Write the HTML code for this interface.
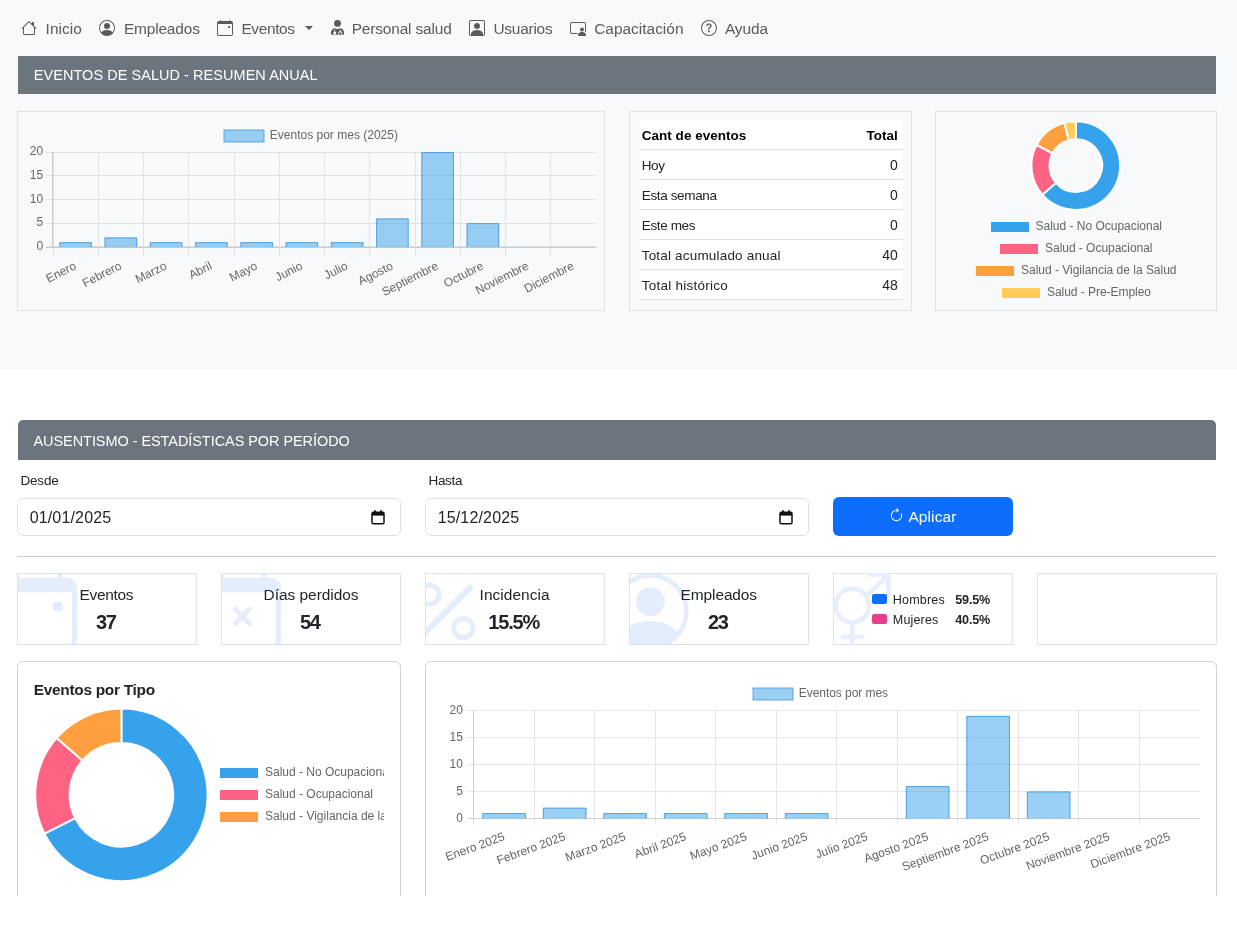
<!DOCTYPE html>
<html lang="es"><head><meta charset="utf-8"><title>Eventos de salud</title>
<style>
html,body{margin:0;padding:0;background:#fff}
body{width:1237px;height:928px;position:relative;overflow:hidden;font-family:"Liberation Sans", sans-serif}
.t{position:absolute;white-space:pre;line-height:1;}
svg{display:block;overflow:visible}
</style></head><body>
<div id="root" style="position:absolute;left:0;top:0;width:1237px;height:928px;will-change:transform">
<div style="position:absolute;left:0;top:0;width:1237px;height:370px;background:#f8f9fa"></div>
<svg style="position:absolute;left:20.5px;top:20px" width="16" height="16" viewBox="0 0 16 16" fill="#595a5c"><path d="M8.707 1.5a1 1 0 0 0-1.414 0L.646 8.146a.5.5 0 0 0 .708.708L2 8.207V13.5A1.5 1.5 0 0 0 3.5 15h9a1.5 1.5 0 0 0 1.5-1.5V8.207l.646.647a.5.5 0 0 0 .708-.708L13 5.793V2.500a.5.5 0 0 0-.5-.5h-1a.5.5 0 0 0-.5.5v1.293L8.707 1.500ZM13 7.207V13.500a.5.5 0 0 1-.5.5h-9a.5.5 0 0 1-.5-.5V7.207l5-5 5 5Z"/></svg>
<svg style="position:absolute;left:99px;top:20px" width="16" height="16" viewBox="0 0 16 16" fill="#595a5c"><path d="M11 6a3 3 0 1 1-6 0 3 3 0 0 1 6 0z"/><path fill-rule="evenodd" d="M0 8a8 8 0 1 1 16 0A8 8 0 0 1 0 8zm8-7a7 7 0 0 0-5.468 11.370C3.242 11.226 4.805 10 8 10s4.757 1.225 5.468 2.370A7 7 0 0 0 8 1z"/></svg>
<svg style="position:absolute;left:216.7px;top:20px" width="16" height="16" viewBox="0 0 16 16" fill="#595a5c"><path d="M11 6.500a.5.5 0 0 1 .5-.5h1a.5.5 0 0 1 .5.5v1a.5.5 0 0 1-.5.5h-1a.5.5 0 0 1-.5-.5v-1z"/><path d="M3.500 0a.5.5 0 0 1 .5.5V1h8V.500a.5.5 0 0 1 1 0V1h1a2 2 0 0 1 2 2v11a2 2 0 0 1-2 2H2a2 2 0 0 1-2-2V3a2 2 0 0 1 2-2h1V.500a.5.5 0 0 1 .5-.5zM1 4v10a1 1 0 0 0 1 1h12a1 1 0 0 0 1-1V4H1z"/></svg>
<div style="position:absolute;left:304.6px;top:26.3px;width:0;height:0;border-left:4.4px solid transparent;border-right:4.4px solid transparent;border-top:4.6px solid #595a5c"></div>
<svg style="position:absolute;left:331px;top:20px" width="13" height="14.857142857142858" viewBox="0 0 14 16" fill="#595a5c"><circle cx="7" cy="3.700" r="3.700"/><path fill-rule="evenodd" d="M3.800 8.800C1.600 9.300 0 11 0 13.300V14.700c0 .7.6 1.300 1.300 1.300h11.400c.7 0 1.300-.6 1.300-1.300v-1.400c0-2.300-1.600-4-3.800-4.500c-.9.500-2 .8-3.200.8s-2.300-.300-3.200-.800zM3.500 10.500v2.200a1.500 1.500 0 1 0 1 0v-2zM9.500 10.500v1.600c-1 .3-1.700 1.200-1.700 2.200v1h1v-1c0-.7.500-1.200 1.200-1.200s1.200.5 1.200 1.200v1h1v-1c0-1-.7-1.900-1.700-2.200v-1.400z"/></svg>
<svg style="position:absolute;left:468.9px;top:20px" width="16" height="16" viewBox="0 0 16 16" fill="#595a5c"><path d="M11 6a3 3 0 1 1-6 0 3 3 0 0 1 6 0z"/><path d="M2 0a2 2 0 0 0-2 2v12a2 2 0 0 0 2 2h12a2 2 0 0 0 2-2V2a2 2 0 0 0-2-2H2zm12 1a1 1 0 0 1 1 1v12a1 1 0 0 1-1 1v-1c0-1-1-4-6-4s-6 3-6 4v1a1 1 0 0 1-1-1V2a1 1 0 0 1 1-1h12z"/></svg>
<svg style="position:absolute;left:569.7px;top:20px" width="16" height="16" viewBox="0 0 16 16" fill="#595a5c"><path d="M14 9.500a2 2 0 1 1-4 0 2 2 0 0 1 4 0Zm-6 5.700c0 .8.8.8.8.8h6.400s.8 0 .8-.8-.8-3.200-4-3.200-4 2.400-4 3.200Z"/><path d="M2 2a2 2 0 0 0-2 2v8a2 2 0 0 0 2 2h5.243c.122-.326.295-.668.526-1H2a1 1 0 0 1-1-1V4a1 1 0 0 1 1-1h12a1 1 0 0 1 1 1v7.810c.353.230.656.496.910.783.059-.187.090-.386.090-.593V4a2 2 0 0 0-2-2H2Z"/></svg>
<svg style="position:absolute;left:700.8px;top:20px" width="16" height="16" viewBox="0 0 16 16" fill="#595a5c"><path d="M8 15A7 7 0 1 1 8 1a7 7 0 0 1 0 14zm0 1A8 8 0 1 0 8 0a8 8 0 0 0 0 16z"/><path d="M5.255 5.786a.237.237 0 0 0 .241.247h.825c.138 0 .248-.113.266-.25.090-.656.540-1.134 1.342-1.134.686 0 1.314.343 1.314 1.168 0 .635-.374.927-.965 1.371-.673.489-1.206 1.060-1.168 1.987l.003.217a.25.25 0 0 0 .25.246h.811a.25.25 0 0 0 .25-.25v-.105c0-.718.273-.927 1.010-1.486.609-.463 1.244-.977 1.244-2.056 0-1.511-1.276-2.241-2.673-2.241-1.267 0-2.655.590-2.750 2.286zm1.557 5.763c0 .533.425.927 1.010.927.609 0 1.028-.394 1.028-.927 0-.552-.420-.940-1.029-.940-.584 0-1.009.388-1.009.940z"/></svg>
<div style="position:absolute;left:18px;top:56px;width:1198px;height:38px;background:#6c757d"></div>
<div style="position:absolute;left:17px;top:111px;width:588px;height:200px;box-sizing:border-box;border:1px solid #dee2e6;background:transparent;border-radius:0px;"></div>
<div style="position:absolute;left:629px;top:111px;width:283px;height:200px;box-sizing:border-box;border:1px solid #dee2e6;background:transparent;border-radius:0px;"></div>
<div style="position:absolute;left:935px;top:111px;width:282px;height:200px;box-sizing:border-box;border:1px solid #dee2e6;background:transparent;border-radius:0px;"></div>
<svg style="position:absolute;left:0;top:0" width="1237" height="928" viewBox="0 0 1237 928"><line x1="46" y1="246.5" x2="596" y2="246.5" stroke="#e1e2e3" stroke-width="1"/><line x1="46" y1="223.5" x2="596" y2="223.5" stroke="#e1e2e3" stroke-width="1"/><line x1="46" y1="199.5" x2="596" y2="199.5" stroke="#e1e2e3" stroke-width="1"/><line x1="46" y1="175.5" x2="596" y2="175.5" stroke="#e1e2e3" stroke-width="1"/><line x1="46" y1="152.5" x2="596" y2="152.5" stroke="#e1e2e3" stroke-width="1"/><line x1="53.5" y1="152.1" x2="53.5" y2="255.9" stroke="#e1e2e3" stroke-width="1"/><line x1="98.5" y1="152.1" x2="98.5" y2="255.9" stroke="#e1e2e3" stroke-width="1"/><line x1="143.5" y1="152.1" x2="143.5" y2="255.9" stroke="#e1e2e3" stroke-width="1"/><line x1="188.5" y1="152.1" x2="188.5" y2="255.9" stroke="#e1e2e3" stroke-width="1"/><line x1="234.5" y1="152.1" x2="234.5" y2="255.9" stroke="#e1e2e3" stroke-width="1"/><line x1="279.5" y1="152.1" x2="279.5" y2="255.9" stroke="#e1e2e3" stroke-width="1"/><line x1="324.5" y1="152.1" x2="324.5" y2="255.9" stroke="#e1e2e3" stroke-width="1"/><line x1="369.5" y1="152.1" x2="369.5" y2="255.9" stroke="#e1e2e3" stroke-width="1"/><line x1="415.5" y1="152.1" x2="415.5" y2="255.9" stroke="#e1e2e3" stroke-width="1"/><line x1="460.5" y1="152.1" x2="460.5" y2="255.9" stroke="#e1e2e3" stroke-width="1"/><line x1="505.5" y1="152.1" x2="505.5" y2="255.9" stroke="#e1e2e3" stroke-width="1"/><line x1="550.5" y1="152.1" x2="550.5" y2="255.9" stroke="#e1e2e3" stroke-width="1"/><line x1="46" y1="247.5" x2="596" y2="247.5" stroke="#c9cacb" stroke-width="1"/><line x1="52.5" y1="152.1" x2="52.5" y2="246.9" stroke="#c9cacb" stroke-width="1"/><rect x="59.34" y="242.16" width="32.58" height="4.74" fill="rgba(54,162,235,0.5)"/><path d="M59.84 246.90V242.66H91.41V246.90" fill="none" stroke="rgba(45,140,215,0.65)" stroke-width="1"/><rect x="104.59" y="237.42" width="32.58" height="9.48" fill="rgba(54,162,235,0.5)"/><path d="M105.09 246.90V237.92H136.67V246.90" fill="none" stroke="rgba(45,140,215,0.65)" stroke-width="1"/><rect x="149.84" y="242.16" width="32.58" height="4.74" fill="rgba(54,162,235,0.5)"/><path d="M150.34 246.90V242.66H181.92V246.90" fill="none" stroke="rgba(45,140,215,0.65)" stroke-width="1"/><rect x="195.09" y="242.16" width="32.58" height="4.74" fill="rgba(54,162,235,0.5)"/><path d="M195.59 246.90V242.66H227.17V246.90" fill="none" stroke="rgba(45,140,215,0.65)" stroke-width="1"/><rect x="240.34" y="242.16" width="32.58" height="4.74" fill="rgba(54,162,235,0.5)"/><path d="M240.84 246.90V242.66H272.42V246.90" fill="none" stroke="rgba(45,140,215,0.65)" stroke-width="1"/><rect x="285.58" y="242.16" width="32.58" height="4.74" fill="rgba(54,162,235,0.5)"/><path d="M286.08 246.90V242.66H317.66V246.90" fill="none" stroke="rgba(45,140,215,0.65)" stroke-width="1"/><rect x="330.83" y="242.16" width="32.58" height="4.74" fill="rgba(54,162,235,0.5)"/><path d="M331.33 246.90V242.66H362.91V246.90" fill="none" stroke="rgba(45,140,215,0.65)" stroke-width="1"/><rect x="376.08" y="218.46" width="32.58" height="28.44" fill="rgba(54,162,235,0.5)"/><path d="M376.58 246.90V218.96H408.16V246.90" fill="none" stroke="rgba(45,140,215,0.65)" stroke-width="1"/><rect x="421.33" y="152.10" width="32.58" height="94.80" fill="rgba(54,162,235,0.5)"/><path d="M421.83 246.90V152.60H453.41V246.90" fill="none" stroke="rgba(45,140,215,0.65)" stroke-width="1"/><rect x="466.58" y="223.20" width="32.58" height="23.70" fill="rgba(54,162,235,0.5)"/><path d="M467.08 246.90V223.70H498.66V246.90" fill="none" stroke="rgba(45,140,215,0.65)" stroke-width="1"/><rect x="224.0" y="130.0" width="40" height="12" fill="rgba(54,162,235,0.5)" stroke="rgba(60,145,210,0.75)" stroke-width="1"/><text transform="translate(77.12,268.40) rotate(-27)" text-anchor="end" font-family='"Liberation Sans", sans-serif' font-size="12" fill="#666" >Enero</text><text transform="translate(122.38,268.40) rotate(-27)" text-anchor="end" font-family='"Liberation Sans", sans-serif' font-size="12" fill="#666" >Febrero</text><text transform="translate(167.62,268.40) rotate(-27)" text-anchor="end" font-family='"Liberation Sans", sans-serif' font-size="12" fill="#666" >Marzo</text><text transform="translate(212.88,268.40) rotate(-27)" text-anchor="end" font-family='"Liberation Sans", sans-serif' font-size="12" fill="#666" >Abril</text><text transform="translate(258.12,268.40) rotate(-27)" text-anchor="end" font-family='"Liberation Sans", sans-serif' font-size="12" fill="#666" >Mayo</text><text transform="translate(303.38,268.40) rotate(-27)" text-anchor="end" font-family='"Liberation Sans", sans-serif' font-size="12" fill="#666" >Junio</text><text transform="translate(348.62,268.40) rotate(-27)" text-anchor="end" font-family='"Liberation Sans", sans-serif' font-size="12" fill="#666" >Julio</text><text transform="translate(393.88,268.40) rotate(-27)" text-anchor="end" font-family='"Liberation Sans", sans-serif' font-size="12" fill="#666" >Agosto</text><text transform="translate(439.12,268.40) rotate(-27)" text-anchor="end" font-family='"Liberation Sans", sans-serif' font-size="12" fill="#666" >Septiembre</text><text transform="translate(484.38,268.40) rotate(-27)" text-anchor="end" font-family='"Liberation Sans", sans-serif' font-size="12" fill="#666" >Octubre</text><text transform="translate(529.62,268.40) rotate(-27)" text-anchor="end" font-family='"Liberation Sans", sans-serif' font-size="12" fill="#666" >Noviembre</text><text transform="translate(574.88,268.40) rotate(-27)" text-anchor="end" font-family='"Liberation Sans", sans-serif' font-size="12" fill="#666" >Diciembre</text></svg>
<div style="position:absolute;left:640px;top:120px;width:263px;height:180px;background:#fff"></div>
<div style="position:absolute;left:640px;top:149px;width:263px;height:1px;background:#dee2e6"></div>
<div style="position:absolute;left:640px;top:179px;width:263px;height:1px;background:#dee2e6"></div>
<div style="position:absolute;left:640px;top:209px;width:263px;height:1px;background:#dee2e6"></div>
<div style="position:absolute;left:640px;top:239px;width:263px;height:1px;background:#dee2e6"></div>
<div style="position:absolute;left:640px;top:269px;width:263px;height:1px;background:#dee2e6"></div>
<div style="position:absolute;left:640px;top:299px;width:263px;height:1px;background:#dee2e6"></div>
<svg style="position:absolute;left:0;top:0" width="1237" height="928" viewBox="0 0 1237 928"><path d="M1075.80 121.20A44.4 44.4 0 1 1 1042.29 194.73L1055.95 182.85A26.3 26.3 0 1 0 1075.80 139.30Z" fill="#36a2eb" stroke="#fff" stroke-width="2" stroke-linejoin="round"/><path d="M1042.29 194.73A44.4 44.4 0 0 1 1036.60 144.76L1052.58 153.25A26.3 26.3 0 0 0 1055.95 182.85Z" fill="#ff6384" stroke="#fff" stroke-width="2" stroke-linejoin="round"/><path d="M1036.60 144.76A44.4 44.4 0 0 1 1064.31 122.71L1068.99 140.20A26.3 26.3 0 0 0 1052.58 153.25Z" fill="#ff9f40" stroke="#fff" stroke-width="2" stroke-linejoin="round"/><path d="M1064.31 122.71A44.4 44.4 0 0 1 1075.80 121.20L1075.80 139.30A26.3 26.3 0 0 0 1068.99 140.20Z" fill="#ffcd56" stroke="#fff" stroke-width="2" stroke-linejoin="round"/></svg>
<div style="position:absolute;left:990.5px;top:221.7px;width:38px;height:10px;background:#36a2eb"></div>
<div style="position:absolute;left:1000px;top:243.7px;width:38px;height:10px;background:#ff6384"></div>
<div style="position:absolute;left:976px;top:265.7px;width:38px;height:10px;background:#ff9f40"></div>
<div style="position:absolute;left:1002px;top:287.7px;width:38px;height:10px;background:#ffcd56"></div>
<div style="position:absolute;left:18px;top:420px;width:1198px;height:40px;background:#6c757d;border-radius:5px 5px 0 0"></div>
<div style="position:absolute;left:17px;top:498px;width:384px;height:38px;box-sizing:border-box;border:1px solid #dee2e6;border-radius:6px;background:#fff"></div>
<svg style="position:absolute;left:371px;top:510px" width="14" height="15" viewBox="0 0 14 15"><rect x="1" y="2.2" width="12" height="11.6" rx="1.3" fill="none" stroke="#111" stroke-width="1.5"/><rect x="1" y="2" width="12" height="3.6" fill="#111"/><rect x="3" y="0.3" width="1.8" height="2.5" fill="#111"/><rect x="9.2" y="0.3" width="1.8" height="2.5" fill="#111"/></svg>
<div style="position:absolute;left:425px;top:498px;width:384px;height:38px;box-sizing:border-box;border:1px solid #dee2e6;border-radius:6px;background:#fff"></div>
<svg style="position:absolute;left:779px;top:510px" width="14" height="15" viewBox="0 0 14 15"><rect x="1" y="2.2" width="12" height="11.6" rx="1.3" fill="none" stroke="#111" stroke-width="1.5"/><rect x="1" y="2" width="12" height="3.6" fill="#111"/><rect x="3" y="0.3" width="1.8" height="2.5" fill="#111"/><rect x="9.2" y="0.3" width="1.8" height="2.5" fill="#111"/></svg>
<div style="position:absolute;left:833px;top:497px;width:180px;height:39px;background:#0d6efd;border-radius:6px"></div>
<svg style="position:absolute;left:889px;top:508px" width="15" height="15" viewBox="0 0 16 16" fill="#fff"><path fill-rule="evenodd" d="M8 3a5 5 0 1 0 4.546 2.914.5.5 0 0 1 .908-.417A6 6 0 1 1 8 2v1z"/><path d="M8 4.466V.534a.25.25 0 0 1 .410-.192l2.360 1.966c.12.1.12.284 0 .384L8.410 4.658A.25.25 0 0 1 8 4.466z"/></svg>
<div style="position:absolute;left:17px;top:556px;width:1199px;height:1px;background:#c9cbcd"></div>
<div style="position:absolute;left:17px;top:573px;width:180px;height:72px;box-sizing:border-box;border:1px solid #dee2e6;background:#fff;overflow:hidden"><svg style="position:absolute;left:-18px;top:-1px" width="76.8" height="76.8" viewBox="0 0 16 16" fill="#e4edfc"><path d="M11 6.500a.5.5 0 0 1 .5-.5h1a.5.5 0 0 1 .5.5v1a.5.5 0 0 1-.5.5h-1a.5.5 0 0 1-.5-.5v-1z"/><path d="M3.500 0a.5.5 0 0 1 .5.5V1h8V.500a.5.5 0 0 1 1 0V1h1a2 2 0 0 1 2 2v11a2 2 0 0 1-2 2H2a2 2 0 0 1-2-2V3a2 2 0 0 1 2-2h1V.500a.5.5 0 0 1 .5-.5zM1 4v10a1 1 0 0 0 1 1h12a1 1 0 0 0 1-1V4H1z"/></svg></div>
<div style="position:absolute;left:221px;top:573px;width:180px;height:72px;box-sizing:border-box;border:1px solid #dee2e6;background:#fff;overflow:hidden"><svg style="position:absolute;left:-18px;top:-1px" width="76.8" height="76.8" viewBox="0 0 16 16" fill="#e4edfc"><path d="M6.146 7.146a.5.5 0 0 1 .708 0L8 8.293l1.146-1.147a.5.5 0 1 1 .708.708L8.707 9l1.147 1.146a.5.5 0 0 1-.708.708L8 9.707l-1.146 1.147a.5.5 0 0 1-.708-.708L7.293 9 6.146 7.854a.5.5 0 0 1 0-.708z"/><path d="M3.500 0a.5.5 0 0 1 .5.5V1h8V.500a.5.5 0 0 1 1 0V1h1a2 2 0 0 1 2 2v11a2 2 0 0 1-2 2H2a2 2 0 0 1-2-2V3a2 2 0 0 1 2-2h1V.500a.5.5 0 0 1 .5-.5zM1 4v10a1 1 0 0 0 1 1h12a1 1 0 0 0 1-1V4H1z"/></svg></div>
<div style="position:absolute;left:425px;top:573px;width:180px;height:72px;box-sizing:border-box;border:1px solid #dee2e6;background:#fff;overflow:hidden"><svg style="position:absolute;left:-18px;top:-1px" width="76.8" height="76.8" viewBox="0 0 16 16" fill="#e4edfc"><path d="M13.442 2.558a.625.625 0 0 1 0 .884l-10 10a.625.625 0 1 1-.884-.884l10-10a.625.625 0 0 1 .884 0zM4.500 6a1.500 1.500 0 1 1 0-3 1.500 1.500 0 0 1 0 3zm0 1a2.500 2.500 0 1 0 0-5 2.500 2.500 0 0 0 0 5zm7 6a1.500 1.500 0 1 1 0-3 1.500 1.500 0 0 1 0 3zm0 1a2.500 2.500 0 1 0 0-5 2.500 2.500 0 0 0 0 5z"/></svg></div>
<div style="position:absolute;left:629px;top:573px;width:180px;height:72px;box-sizing:border-box;border:1px solid #dee2e6;background:#fff;overflow:hidden"><svg style="position:absolute;left:-18px;top:-1px" width="76.8" height="76.8" viewBox="0 0 16 16" fill="#e4edfc"><path d="M11 6a3 3 0 1 1-6 0 3 3 0 0 1 6 0z"/><path fill-rule="evenodd" d="M0 8a8 8 0 1 1 16 0A8 8 0 0 1 0 8zm8-7a7 7 0 0 0-5.468 11.370C3.242 11.226 4.805 10 8 10s4.757 1.225 5.468 2.370A7 7 0 0 0 8 1z"/></svg></div>
<div style="position:absolute;left:833px;top:573px;width:180px;height:72px;box-sizing:border-box;border:1px solid #dee2e6;background:#fff;border-radius:0px;"></div>
<div style="position:absolute;left:1037px;top:573px;width:180px;height:72px;box-sizing:border-box;border:1px solid #dee2e6;background:#fff;border-radius:0px;"></div>
<div style="position:absolute;left:833px;top:573px;width:180px;height:72px;overflow:hidden"><svg style="position:absolute;left:-19px;top:-1px" width="76.8" height="76.8" viewBox="0 0 16 16" fill="#e8eefb"><path fill-rule="evenodd" d="M11.500 1a.5.5 0 0 1 0-1h4a.5.5 0 0 1 .5.5v4a.5.5 0 0 1-1 0V1.707l-3.450 3.450A4 4 0 0 1 8.500 10.970V13H10a.5.5 0 0 1 0 1H8.500v1.500a.5.5 0 0 1-1 0V14H6a.5.5 0 0 1 0-1h1.500v-2.030a4 4 0 1 1 3.471-6.648L14.293 1H11.500zm-.997 4.346a3 3 0 1 0-5.006 3.309 3 3 0 0 0 5.006-3.310z"/></svg></div>
<div style="position:absolute;left:872px;top:593.5px;width:15px;height:10px;background:#0d6efd;border-radius:2px"></div>
<div style="position:absolute;left:872px;top:613.5px;width:15px;height:10px;background:#e83e8c;border-radius:2px"></div>
<div style="position:absolute;left:17px;top:661px;width:384px;height:260px;box-sizing:border-box;border:1px solid #d3d3d3;background:#fff;border-radius:6px"></div>
<div style="position:absolute;left:425px;top:661px;width:792px;height:260px;box-sizing:border-box;border:1px solid #d3d3d3;background:#fff;border-radius:6px"></div>
<svg style="position:absolute;left:0;top:0" width="1237" height="928" viewBox="0 0 1237 928"><path d="M121.40 708.60A86.2 86.2 0 1 1 44.46 833.67L75.16 818.16A51.8 51.8 0 1 0 121.40 743.00Z" fill="#36a2eb" stroke="#fff" stroke-width="2" stroke-linejoin="round"/><path d="M44.46 833.67A86.2 86.2 0 0 1 56.64 737.91L82.48 760.61A51.8 51.8 0 0 0 75.16 818.16Z" fill="#ff6384" stroke="#fff" stroke-width="2" stroke-linejoin="round"/><path d="M56.64 737.91A86.2 86.2 0 0 1 121.40 708.60L121.40 743.00A51.8 51.8 0 0 0 82.48 760.61Z" fill="#ff9f40" stroke="#fff" stroke-width="2" stroke-linejoin="round"/></svg>
<div style="position:absolute;left:215px;top:760px;width:169px;height:70px;overflow:hidden">
</div>
<div style="position:absolute;left:220px;top:767.5px;width:38px;height:10px;background:#36a2eb"></div>
<div style="position:absolute;left:220px;top:789.5px;width:38px;height:10px;background:#ff6384"></div>
<div style="position:absolute;left:220px;top:811.5px;width:38px;height:10px;background:#ff9f40"></div>
<svg style="position:absolute;left:0;top:0" width="1237" height="928" viewBox="0 0 1237 928"><line x1="466.9" y1="818.5" x2="1199.9" y2="818.5" stroke="#e7e7e7" stroke-width="1"/><line x1="466.9" y1="791.5" x2="1199.9" y2="791.5" stroke="#e7e7e7" stroke-width="1"/><line x1="466.9" y1="764.5" x2="1199.9" y2="764.5" stroke="#e7e7e7" stroke-width="1"/><line x1="466.9" y1="737.5" x2="1199.9" y2="737.5" stroke="#e7e7e7" stroke-width="1"/><line x1="466.9" y1="710.5" x2="1199.9" y2="710.5" stroke="#e7e7e7" stroke-width="1"/><line x1="473.5" y1="710.5" x2="473.5" y2="825.0" stroke="#e7e7e7" stroke-width="1"/><line x1="534.5" y1="710.5" x2="534.5" y2="825.0" stroke="#e7e7e7" stroke-width="1"/><line x1="594.5" y1="710.5" x2="594.5" y2="825.0" stroke="#e7e7e7" stroke-width="1"/><line x1="655.5" y1="710.5" x2="655.5" y2="825.0" stroke="#e7e7e7" stroke-width="1"/><line x1="715.5" y1="710.5" x2="715.5" y2="825.0" stroke="#e7e7e7" stroke-width="1"/><line x1="776.5" y1="710.5" x2="776.5" y2="825.0" stroke="#e7e7e7" stroke-width="1"/><line x1="836.5" y1="710.5" x2="836.5" y2="825.0" stroke="#e7e7e7" stroke-width="1"/><line x1="897.5" y1="710.5" x2="897.5" y2="825.0" stroke="#e7e7e7" stroke-width="1"/><line x1="957.5" y1="710.5" x2="957.5" y2="825.0" stroke="#e7e7e7" stroke-width="1"/><line x1="1018.5" y1="710.5" x2="1018.5" y2="825.0" stroke="#e7e7e7" stroke-width="1"/><line x1="1078.5" y1="710.5" x2="1078.5" y2="825.0" stroke="#e7e7e7" stroke-width="1"/><line x1="1139.5" y1="710.5" x2="1139.5" y2="825.0" stroke="#e7e7e7" stroke-width="1"/><line x1="466.9" y1="818.5" x2="1199.9" y2="818.5" stroke="#cfcfcf" stroke-width="1"/><line x1="473.5" y1="710.5" x2="473.5" y2="818.5" stroke="#cfcfcf" stroke-width="1"/><rect x="482.37" y="813.10" width="43.56" height="5.40" fill="rgba(54,162,235,0.5)"/><path d="M482.87 818.50V813.60H525.43V818.50" fill="none" stroke="rgba(45,140,215,0.65)" stroke-width="1"/><rect x="542.87" y="807.70" width="43.56" height="10.80" fill="rgba(54,162,235,0.5)"/><path d="M543.37 818.50V808.20H585.93V818.50" fill="none" stroke="rgba(45,140,215,0.65)" stroke-width="1"/><rect x="603.37" y="813.10" width="43.56" height="5.40" fill="rgba(54,162,235,0.5)"/><path d="M603.87 818.50V813.60H646.43V818.50" fill="none" stroke="rgba(45,140,215,0.65)" stroke-width="1"/><rect x="663.87" y="813.10" width="43.56" height="5.40" fill="rgba(54,162,235,0.5)"/><path d="M664.37 818.50V813.60H706.93V818.50" fill="none" stroke="rgba(45,140,215,0.65)" stroke-width="1"/><rect x="724.37" y="813.10" width="43.56" height="5.40" fill="rgba(54,162,235,0.5)"/><path d="M724.87 818.50V813.60H767.43V818.50" fill="none" stroke="rgba(45,140,215,0.65)" stroke-width="1"/><rect x="784.87" y="813.10" width="43.56" height="5.40" fill="rgba(54,162,235,0.5)"/><path d="M785.37 818.50V813.60H827.93V818.50" fill="none" stroke="rgba(45,140,215,0.65)" stroke-width="1"/><rect x="905.87" y="786.10" width="43.56" height="32.40" fill="rgba(54,162,235,0.5)"/><path d="M906.37 818.50V786.60H948.93V818.50" fill="none" stroke="rgba(45,140,215,0.65)" stroke-width="1"/><rect x="966.37" y="715.90" width="43.56" height="102.60" fill="rgba(54,162,235,0.5)"/><path d="M966.87 818.50V716.40H1009.43V818.50" fill="none" stroke="rgba(45,140,215,0.65)" stroke-width="1"/><rect x="1026.87" y="791.50" width="43.56" height="27.00" fill="rgba(54,162,235,0.5)"/><path d="M1027.37 818.50V792.00H1069.93V818.50" fill="none" stroke="rgba(45,140,215,0.65)" stroke-width="1"/><rect x="753.0" y="688.0" width="40" height="12" fill="rgba(54,162,235,0.5)" stroke="rgba(60,145,210,0.75)" stroke-width="1"/><text transform="translate(505.65,839.80) rotate(-20)" text-anchor="end" font-family='"Liberation Sans", sans-serif' font-size="12" fill="#666" >Enero 2025</text><text transform="translate(566.15,839.80) rotate(-20)" text-anchor="end" font-family='"Liberation Sans", sans-serif' font-size="12" fill="#666" >Febrero 2025</text><text transform="translate(626.65,839.80) rotate(-20)" text-anchor="end" font-family='"Liberation Sans", sans-serif' font-size="12" fill="#666" >Marzo 2025</text><text transform="translate(687.15,839.80) rotate(-20)" text-anchor="end" font-family='"Liberation Sans", sans-serif' font-size="12" fill="#666" >Abril 2025</text><text transform="translate(747.65,839.80) rotate(-20)" text-anchor="end" font-family='"Liberation Sans", sans-serif' font-size="12" fill="#666" >Mayo 2025</text><text transform="translate(808.15,839.80) rotate(-20)" text-anchor="end" font-family='"Liberation Sans", sans-serif' font-size="12" fill="#666" >Junio 2025</text><text transform="translate(868.65,839.80) rotate(-20)" text-anchor="end" font-family='"Liberation Sans", sans-serif' font-size="12" fill="#666" >Julio 2025</text><text transform="translate(929.15,839.80) rotate(-20)" text-anchor="end" font-family='"Liberation Sans", sans-serif' font-size="12" fill="#666" >Agosto 2025</text><text transform="translate(989.65,839.80) rotate(-20)" text-anchor="end" font-family='"Liberation Sans", sans-serif' font-size="12" fill="#666" >Septiembre 2025</text><text transform="translate(1050.15,839.80) rotate(-20)" text-anchor="end" font-family='"Liberation Sans", sans-serif' font-size="12" fill="#666" >Octubre 2025</text><text transform="translate(1110.65,839.80) rotate(-20)" text-anchor="end" font-family='"Liberation Sans", sans-serif' font-size="12" fill="#666" >Noviembre 2025</text><text transform="translate(1171.15,839.80) rotate(-20)" text-anchor="end" font-family='"Liberation Sans", sans-serif' font-size="12" fill="#666" >Diciembre 2025</text></svg>
<div style="position:absolute;left:0;top:896px;width:1237px;height:32px;background:#fff"></div>
<div class="t" style="left:45.58px;top:21.33px;font-size:15.44px;font-weight:400;color:#595a5c;letter-spacing:0.051px">Inicio</div>
<div class="t" style="left:123.88px;top:21.33px;font-size:15.44px;font-weight:400;color:#595a5c;letter-spacing:-0.154px">Empleados</div>
<div class="t" style="left:241.38px;top:21.33px;font-size:15.44px;font-weight:400;color:#595a5c;letter-spacing:-0.347px">Eventos</div>
<div class="t" style="left:351.68px;top:21.33px;font-size:15.44px;font-weight:400;color:#595a5c;letter-spacing:-0.156px">Personal salud</div>
<div class="t" style="left:493.48px;top:21.33px;font-size:15.44px;font-weight:400;color:#595a5c;letter-spacing:-0.246px">Usuarios</div>
<div class="t" style="left:594.18px;top:21.33px;font-size:15.44px;font-weight:400;color:#595a5c;letter-spacing:0.005px">Capacitación</div>
<div class="t" style="left:724.88px;top:21.33px;font-size:15.44px;font-weight:400;color:#595a5c;letter-spacing:-0.050px">Ayuda</div>
<div class="t" style="left:33.82px;top:67.85px;font-size:14.47px;font-weight:400;color:#fff;letter-spacing:0.060px;transform:scaleY(1.07);transform-origin:0 84.65%">EVENTOS DE SALUD - RESUMEN ANUAL</div>
<div class="t" style="left:269.82px;top:129.34px;font-size:12px;font-weight:400;color:#666;letter-spacing:0.002px">Eventos por mes (2025)</div>
<div class="t" style="right:1193.92px;top:145.34px;font-size:12px;font-weight:400;color:#666">20</div>
<div class="t" style="right:1193.92px;top:169.04px;font-size:12px;font-weight:400;color:#666">15</div>
<div class="t" style="right:1193.92px;top:192.74px;font-size:12px;font-weight:400;color:#666">10</div>
<div class="t" style="right:1193.92px;top:216.44px;font-size:12px;font-weight:400;color:#666">5</div>
<div class="t" style="right:1193.92px;top:240.14px;font-size:12px;font-weight:400;color:#666">0</div>
<div class="t" style="left:641.76px;top:128.86px;font-size:13.51px;font-weight:700;color:#000;letter-spacing:0.023px">Cant de eventos</div>
<div class="t" style="right:339.16px;top:128.86px;font-size:13.51px;font-weight:700;color:#000">Total</div>
<div class="t" style="left:641.76px;top:158.86px;font-size:13.51px;font-weight:400;color:#212529;letter-spacing:-0.408px">Hoy</div>
<div class="t" style="right:339.14px;top:158.45px;font-size:14px;font-weight:400;color:#212529">0</div>
<div class="t" style="left:641.76px;top:188.86px;font-size:13.51px;font-weight:400;color:#212529;letter-spacing:-0.360px">Esta semana</div>
<div class="t" style="right:339.14px;top:188.45px;font-size:14px;font-weight:400;color:#212529">0</div>
<div class="t" style="left:641.76px;top:218.86px;font-size:13.51px;font-weight:400;color:#212529;letter-spacing:-0.369px">Este mes</div>
<div class="t" style="right:339.14px;top:218.45px;font-size:14px;font-weight:400;color:#212529">0</div>
<div class="t" style="left:641.76px;top:248.86px;font-size:13.51px;font-weight:400;color:#212529;letter-spacing:0.180px">Total acumulado anual</div>
<div class="t" style="right:339.14px;top:248.45px;font-size:14px;font-weight:400;color:#212529">40</div>
<div class="t" style="left:641.76px;top:278.86px;font-size:13.51px;font-weight:400;color:#212529;letter-spacing:0.247px">Total histórico</div>
<div class="t" style="right:339.14px;top:278.45px;font-size:14px;font-weight:400;color:#212529">48</div>
<div class="t" style="left:1035.52px;top:219.64px;font-size:12px;font-weight:400;color:#666;letter-spacing:-0.012px">Salud - No Ocupacional</div>
<div class="t" style="left:1045.02px;top:241.64px;font-size:12px;font-weight:400;color:#666;letter-spacing:-0.032px">Salud - Ocupacional</div>
<div class="t" style="left:1021.02px;top:263.64px;font-size:12px;font-weight:400;color:#666;letter-spacing:-0.013px">Salud - Vigilancia de la Salud</div>
<div class="t" style="left:1047.02px;top:285.64px;font-size:12px;font-weight:400;color:#666;letter-spacing:-0.042px">Salud - Pre-Empleo</div>
<div class="t" style="left:33.52px;top:433.55px;font-size:14.47px;font-weight:400;color:#fff;letter-spacing:-0.050px;transform:scaleY(1.07);transform-origin:0 84.65%">AUSENTISMO - ESTADÍSTICAS POR PERÍODO</div>
<div class="t" style="left:20.46px;top:473.86px;font-size:13.51px;font-weight:400;color:#212529;letter-spacing:-0.183px">Desde</div>
<div class="t" style="left:428.46px;top:473.86px;font-size:13.51px;font-weight:400;color:#212529;letter-spacing:-0.320px">Hasta</div>
<div class="t" style="left:29.66px;top:509.96px;font-size:16px;font-weight:400;color:#212529;letter-spacing:0.158px">01/01/2025</div>
<div class="t" style="left:437.66px;top:509.96px;font-size:16px;font-weight:400;color:#212529;letter-spacing:0.158px">15/12/2025</div>
<div class="t" style="left:908.38px;top:509.43px;font-size:15.44px;font-weight:400;color:#fff;letter-spacing:0.135px">Aplicar</div>
<div class="t" style="left:79.58px;top:586.93px;font-size:15.44px;font-weight:400;color:#212529;letter-spacing:-0.297px">Eventos</div>
<div class="t" style="left:95.90px;top:612.07px;font-size:20px;font-weight:700;color:#212529;letter-spacing:-1.200px">37</div>
<div class="t" style="left:263.58px;top:586.93px;font-size:15.44px;font-weight:400;color:#212529;letter-spacing:-0.021px">Días perdidos</div>
<div class="t" style="left:299.90px;top:612.07px;font-size:20px;font-weight:700;color:#212529;letter-spacing:-1.200px">54</div>
<div class="t" style="left:479.58px;top:586.93px;font-size:15.44px;font-weight:400;color:#212529;letter-spacing:0.054px">Incidencia</div>
<div class="t" style="left:488.20px;top:612.07px;font-size:20px;font-weight:700;color:#212529;letter-spacing:-1.130px">15.5%</div>
<div class="t" style="left:680.58px;top:586.93px;font-size:15.44px;font-weight:400;color:#212529;letter-spacing:-0.092px">Empleados</div>
<div class="t" style="left:707.90px;top:612.07px;font-size:20px;font-weight:700;color:#212529;letter-spacing:-1.200px">23</div>
<div class="t" style="left:892.80px;top:594.08px;font-size:12.54px;font-weight:400;color:#212529;letter-spacing:0.193px">Hombres</div>
<div class="t" style="left:955.30px;top:593.53px;font-size:12.6px;font-weight:700;color:#212529;letter-spacing:-0.180px">59.5%</div>
<div class="t" style="left:892.80px;top:613.68px;font-size:12.54px;font-weight:400;color:#212529;letter-spacing:0.154px">Mujeres</div>
<div class="t" style="left:955.30px;top:613.63px;font-size:12.6px;font-weight:700;color:#212529;letter-spacing:-0.180px">40.5%</div>
<div class="t" style="left:33.68px;top:681.93px;font-size:15.44px;font-weight:700;color:#212529;letter-spacing:-0.287px">Eventos por Tipo</div>
<div class="t" style="left:265.02px;top:766.04px;font-size:12px;font-weight:400;color:#666;letter-spacing:-0.012px;width:118.5px;overflow:hidden;padding-bottom:4px">Salud - No Ocupacional</div>
<div class="t" style="left:265.02px;top:788.04px;font-size:12px;font-weight:400;color:#666;letter-spacing:-0.004px">Salud - Ocupacional</div>
<div class="t" style="left:265.02px;top:810.04px;font-size:12px;font-weight:400;color:#666;letter-spacing:0.004px;width:118.5px;overflow:hidden;padding-bottom:4px">Salud - Vigilancia de la Salud</div>
<div class="t" style="left:798.82px;top:687.14px;font-size:12px;font-weight:400;color:#666;letter-spacing:-0.060px">Eventos por mes</div>
<div class="t" style="right:774.12px;top:703.74px;font-size:12px;font-weight:400;color:#666">20</div>
<div class="t" style="right:774.12px;top:730.74px;font-size:12px;font-weight:400;color:#666">15</div>
<div class="t" style="right:774.12px;top:757.74px;font-size:12px;font-weight:400;color:#666">10</div>
<div class="t" style="right:774.12px;top:784.74px;font-size:12px;font-weight:400;color:#666">5</div>
<div class="t" style="right:774.12px;top:811.74px;font-size:12px;font-weight:400;color:#666">0</div>
</div>
</body></html>
